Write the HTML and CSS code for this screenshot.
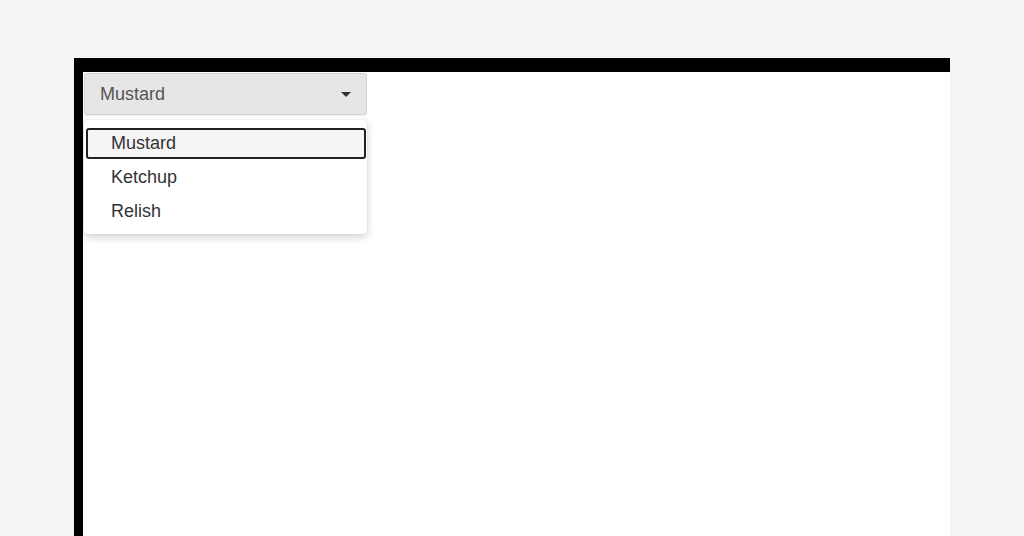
FILE: index.html
```html
<!DOCTYPE html>
<html>
<head>
<meta charset="utf-8">
<link rel="stylesheet" href="styles.css">
</head>
<body>
<div class="frame">
  <div class="select">
    <button class="select-btn">
      <span class="select-label">Mustard</span>
      <span class="caret"></span>
    </button>
    <ul class="menu">
      <li class="item focused">Mustard</li>
      <li class="item">Ketchup</li>
      <li class="item">Relish</li>
    </ul>
  </div>
</div>
</body>
</html>
```

FILE: styles.css
```css
html, body {
  margin: 0;
  padding: 0;
  background: #f4f4f4;
  height: 100%;
  overflow: hidden;
}
body {
  font-family: "Liberation Sans", Arial, sans-serif;
}
.frame {
  margin: 58px 0 0 74px;
  width: 865px;
  height: 462px;
  background: #ffffff;
  border-top: 14px solid #000;
  border-left: 9px solid #000;
  padding: 1px;
}
.select {
  width: 283px;
  display: flex;
  flex-direction: column;
  gap: 5px;
}
.select-btn {
  box-sizing: border-box;
  width: 283px;
  height: 42px;
  display: flex;
  align-items: center;
  justify-content: space-between;
  padding: 0 15px 0 15px;
  background: #e6e6e6;
  border: 1px solid #d2d2d2;
  border-radius: 3px;
  font-family: "Liberation Sans", Arial, sans-serif;
  font-size: 18px;
  color: #555;
  box-shadow: 0 1px 1px rgba(0,0,0,0.06);
}
.caret {
  width: 0;
  height: 0;
  border-left: 5px solid transparent;
  border-right: 5px solid transparent;
  border-top: 5px solid #333;
}
.menu {
  list-style: none;
  margin: 0;
  box-sizing: border-box;
  width: 283px;
  height: 114px;
  padding: 8px 1px 0 2px;
  background: #fff;
  border-radius: 4px;
  box-shadow: 0 3px 8px rgba(0,0,0,0.18), 0 0 1px rgba(0,0,0,0.2);
  display: flex;
  flex-direction: column;
  gap: 3px;
}
.item {
  box-sizing: border-box;
  height: 31px;
  padding: 0 0 0 23px;
  display: flex;
  align-items: center;
  font-size: 18px;
  color: #333;
  border: 2px solid transparent;
  border-radius: 3px;
}
.item.focused {
  border-color: #222;
  background: #f5f5f5;
}
```
